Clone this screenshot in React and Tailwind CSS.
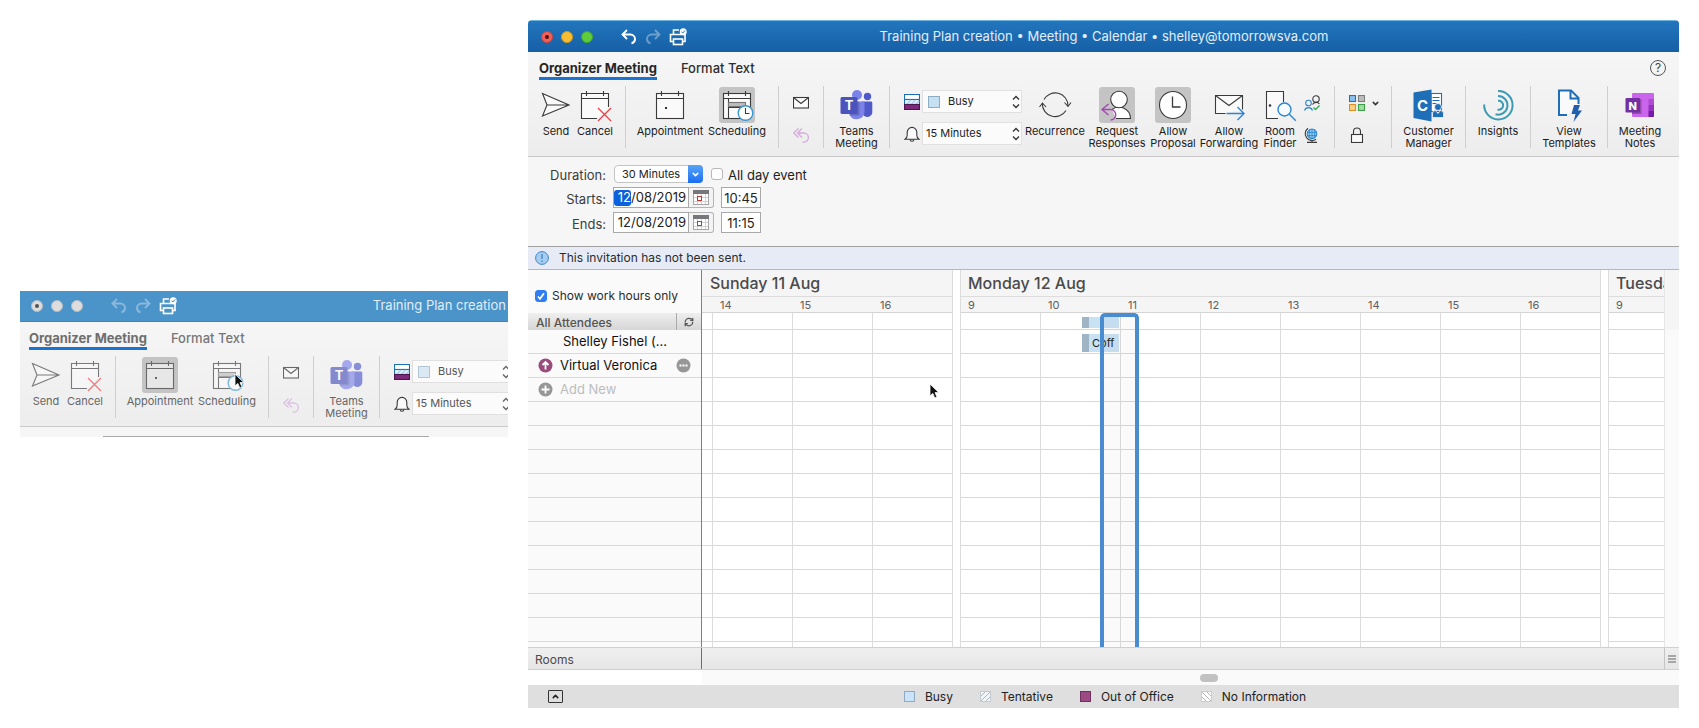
import React, { useState } from "react";
import clsx from "clsx";
import { ChevronDown, ChevronUp, RefreshCw } from "lucide-react";

const HOUR = 80;

/* ---------- icons ---------- */

function Icon({ children, size = 36, className }) {
  return (
    <svg
      width={size}
      height={size}
      viewBox={`0 0 ${size} ${size}`}
      fill="none"
      stroke="#3a3a3a"
      strokeWidth="1.1"
      className={clsx("shrink-0", className)}
      aria-hidden="true"
    >
      {children}
    </svg>
  );
}

function CalendarBase() {
  return (
    <>
      <rect x="4.5" y="6.5" width="27" height="25" fill="#fafafa" />
      <path d="M4.5 11.5h27M9.5 4v5M26.5 4v5" />
    </>
  );
}

const SendIcon = (p) => (
  <Icon {...p}>
    <path d="M4.5 6.5 31 18 4.5 29 9 18zM9 18h22" fill="#fafafa" />
  </Icon>
);

const CancelIcon = (p) => (
  <Icon {...p}>
    <path d="M20 31.5H4.5v-25h27V20" fill="#fafafa" />
    <path d="M4.5 11.5h27M9.5 4v5M26.5 4v5" />
    <path d="m21 21 13 13M34 21 21 34" stroke="#e0434b" strokeWidth="1.3" />
  </Icon>
);

const AppointmentIcon = (p) => (
  <Icon {...p}>
    <CalendarBase />
    <rect x="13" y="20" width="2" height="2" fill="#333" stroke="none" />
  </Icon>
);

const SchedulingIcon = (p) => (
  <Icon {...p}>
    <CalendarBase />
    <path d="M9.5 11.5v20M9.5 20.5h14" />
    <rect x="9.5" y="15.5" width="17" height="4" fill="#bdbdbd" stroke="#777" />
    <circle cx="26.5" cy="26" r="7.3" fill="#fff" stroke="#3b97cf" strokeWidth="1.4" />
    <path d="M26.5 21v5.5h4" />
  </Icon>
);

const MailIcon = (p) => (
  <Icon size={16} {...p}>
    <rect x=".5" y="2.5" width="15" height="10.5" fill="#fafafa" />
    <path d="m.5 2.5 7.5 6 7.5-6" />
  </Icon>
);

const ReplyAllIcon = (p) => (
  <Icon size={16} {...p}>
    <g stroke="#d5abdd" strokeWidth="1.3">
      <path d="M5.5 1.5.8 6l4.7 4.5M9 1.5 4.5 6 9 10.5M4.8 6h6a4.500 4.500 0 0 1 0 9.200H9.500" />
    </g>
  </Icon>
);

const TeamsIcon = (p) => (
  <Icon {...p}>
    <g stroke="none">
      <circle cx="18" cy="8" r="5" fill="#7b83eb" />
      <circle cx="28.500" cy="9.500" r="3.700" fill="#5059c9" />
      <path d="M22.500 14.500H32a1.300 1.300 0 0 1 1.300 1.300v8.500a5 5 0 0 1-10 1.500z" fill="#5059c9" />
      <path d="M10.500 14.500h15v10.500a8 8 0 0 1-15 3z" fill="#7b83eb" />
      <path d="M10.500 14.500h10v14h-9.800z" fill="#000" opacity=".18" />
      <rect x="1.500" y="10" width="17" height="17" rx="1.500" fill="#4b53bc" />
    </g>
    <text
      x="10"
      y="23"
      textAnchor="middle"
      fontSize="13"
      fontWeight="700"
      fontFamily="Inter, sans-serif"
      fill="#fff"
      stroke="none"
    >
      T
    </text>
  </Icon>
);

const ShowAsIcon = () => (
  <Icon size={16}>
    <rect x=".5" y=".5" width="15" height="5" fill="#fff" stroke="#1c6fb0" />
    <rect x=".5" y="5.500" width="15" height="5" fill="#e2f3fd" stroke="#1c6fb0" />
    <path d="m3 10 4-4M7.500 10l4-4M12 10l3-3" stroke="#9fd2ee" />
    <rect x=".5" y="10.500" width="15" height="5" fill="#7c2a79" stroke="#4f1450" />
  </Icon>
);

const BellIcon = () => (
  <Icon size={16}>
    <path d="M1 13.200h14c-1.600-1-2.200-2.200-2.200-4V6.200a4.800 4.800 0 0 0-9.600 0v3c0 1.800-.6 3-2.200 4z" fill="#fafafa" />
    <path d="M6.200 13.500a1.800 1.800 0 0 0 3.600 0" />
  </Icon>
);

const RecurrenceIcon = (p) => (
  <Icon {...p}>
    <path d="M7 12.500A12.800 12.800 0 0 1 31 19M29 23.500A12.800 12.800 0 0 1 5.300 16.500" />
    <path d="m27.500 15.500 3.500 4 3-4M2.500 20l3-4 3.500 4" />
  </Icon>
);

const RequestIcon = (p) => (
  <Icon {...p}>
    <path d="M13 22.500a11.500 11.500 0 0 1 18.500 9H17" fill="#fff" />
    <circle cx="20" cy="12.500" r="8.300" fill="#fff" />
    <path d="m9.500 17-6.500 5.500 6.500 5.500M3 22.500h8.500a5 5 0 0 1 0 10.500" stroke="#a646b4" strokeWidth="1.400" />
  </Icon>
);

const ClockIcon = (p) => (
  <Icon {...p}>
    <circle cx="18" cy="18" r="13.500" fill="#fff" />
    <path d="M17.500 9.500v10.500h8" strokeWidth="1.300" />
  </Icon>
);

const ForwardingIcon = (p) => (
  <Icon {...p}>
    <path d="M14.500 26.500h-10v-18h27v14" fill="#fafafa" />
    <path d="m4.500 8.500 13.500 10 13.500-10" />
    <path d="M15.500 26.500h17.500M26.500 20l6.500 6.500-6.500 6.500" stroke="#2f86d0" strokeWidth="1.400" />
  </Icon>
);

const RoomIcon = (p) => (
  <Icon {...p}>
    <path d="M16 31.500H4.500v-27h17V15" fill="#fafafa" />
    <circle cx="8" cy="18.500" r="1.300" fill="#333" stroke="none" />
    <circle cx="22.500" cy="22.500" r="6.500" fill="#f5fbff" stroke="#2f86d0" strokeWidth="1.400" />
    <path d="m27.300 27.300 6.500 6.500" stroke="#2f86d0" strokeWidth="1.400" />
  </Icon>
);

const PeopleCheckIcon = () => (
  <Icon size={16}>
    <circle cx="12" cy="4" r="3.200" />
    <path d="M8.500 9.500a4.200 4.200 0 0 1 7-.5" />
    <circle cx="4.500" cy="8" r="2.800" stroke="#2f86d0" />
    <path d="M.5 15.500a4.200 4.200 0 0 1 8 0" stroke="#2f86d0" />
    <path d="m9.500 12.500 2 2 4-4" stroke="#35a853" strokeWidth="1.300" />
  </Icon>
);

const GlobeIcon = () => (
  <Icon size={16}>
    <circle cx="8" cy="6.800" r="4.800" fill="#8fcbee" stroke="#2f86d0" />
    <path d="M3.500 5.500h9M3.500 8.500h9M8 2v9.500M6 2.500c-1 3-1 6 0 8.500M10 2.500c1 3 1 6 0 8.500" stroke="#2f86d0" strokeWidth=".8" />
    <path d="M4 1.200a6.800 6.800 0 0 0 8 11M8 13.200v2M3 15.400h10" />
  </Icon>
);

const CategoriesIcon = () => (
  <Icon size={16}>
    <rect x=".5" y=".5" width="6" height="6" fill="#8cc0ec" stroke="#1f74bd" />
    <rect x="9.500" y=".5" width="6" height="6" fill="#bdbdbd" stroke="#7c7c7c" />
    <rect x=".5" y="9.500" width="6" height="6" fill="#fbd08a" stroke="#e38f1f" />
    <rect x="9.500" y="9.500" width="6" height="6" fill="#9fdc9f" stroke="#3c9f48" />
  </Icon>
);

const LockIcon = () => (
  <Icon size={16}>
    <path d="M4.500 7.500v-3a3.500 3.500 0 0 1 7 0v3" />
    <rect x="2.500" y="7.500" width="11" height="8" fill="#fafafa" />
  </Icon>
);

const CustomerIcon = (p) => (
  <Icon {...p}>
    <rect x="20" y="6.500" width="10.500" height="18" fill="#fff" stroke="#1f6fb8" />
    <path d="M21.500 10.500h7M21.500 13.500h7M21.500 16.500h4" stroke="#1f6fb8" />
    <circle cx="27" cy="20" r="3.500" fill="#1f6fb8" stroke="#f4f4f4" strokeWidth=".8" />
    <path d="M21.500 30.500v-4a3 3 0 0 1 3-3l2.500 3 2.500-3a3 3 0 0 1 3 3v4z" fill="#1f6fb8" stroke="#f4f4f4" strokeWidth=".8" />
    <path d="M2.500 5.500 20.500 2.500v32l-18-3.500z" fill="#1f6fb8" stroke="none" />
    <text
      x="11.500"
      y="23.500"
      textAnchor="middle"
      fontSize="15"
      fontWeight="700"
      fontFamily="Inter, sans-serif"
      fill="#fff"
      stroke="none"
    >
      C
    </text>
  </Icon>
);

const InsightsIcon = (p) => (
  <Icon {...p}>
    <g stroke="#3d9ab3" strokeWidth="2">
      <path d="M18 4a14.200 14.200 0 1 1-13.800 13.500" />
      <path d="M18 9a9.300 9.300 0 1 1-2.500 18.200" />
      <path d="M18 13.800a4.500 4.500 0 1 1-.5 8.800" />
    </g>
  </Icon>
);

const TemplatesIcon = (p) => (
  <Icon {...p}>
    <path d="M16 28H8V3.500h12l7.500 7.500v6" fill="#fafafa" stroke="#1f6fb8" strokeWidth="2" />
    <path d="M19.500 4v7.500h8" stroke="#1f6fb8" strokeWidth="2" />
    <path d="M23 18h6l-2 5.500h4L22.500 35l2-8H20.500z" fill="#1f5fae" stroke="none" />
  </Icon>
);

const NotesIcon = (p) => (
  <Icon {...p}>
    <g stroke="none">
      <rect x="10" y="6" width="22" height="24" rx="1" fill="#ca64ea" />
      <path d="M26.500 12H32v6h-5.500z" fill="#ae4bd5" />
      <path d="M26.500 18H32v6h-5.500z" fill="#9332bf" />
      <path d="M26.500 24H32v5a1 1 0 0 1-1 1h-4.500z" fill="#7719aa" />
      <rect x="10" y="12" width="9.500" height="15" fill="#000" opacity=".25" />
      <rect x="3.500" y="11" width="14.500" height="14.500" rx="1" fill="#7330a0" />
    </g>
    <text
      x="10.700"
      y="22.500"
      textAnchor="middle"
      fontSize="11"
      fontWeight="800"
      fontFamily="Inter, sans-serif"
      fill="#fff"
      stroke="none"
    >
      N
    </text>
  </Icon>
);

const UndoIcon = ({ className }) => (
  <svg width="16" height="16" viewBox="0 0 16 16" fill="none" stroke="#fff" strokeWidth="1.900" className={className}>
    <path d="M6 1 1.500 5.500 6 10M1.500 5.500h8a4.500 4.500 0 0 1 4.500 4.500v.5a4.500 4.500 0 0 1-3.500 3.800" />
  </svg>
);

const PrintIcon = () => (
  <svg width="18" height="18" viewBox="0 0 18 18" fill="none" stroke="#fff" strokeWidth="1.600">
    <path d="M10 2H4.500v4.500M4 13.500H1.500v-7h14.500v7h-2.500" />
    <rect x="4.500" y="11" width="9" height="5.500" />
    <circle cx="14.200" cy="3.700" r="3.500" fill="#fff" stroke="none" />
    <path d="m12.500 3.700 1.300 1.300 2.200-2.500" stroke="#2b78bd" strokeWidth="1" />
  </svg>
);

const Cursor = () => (
  <svg width="11" height="17" viewBox="0 0 11 17" aria-hidden="true">
    <path d="M1 1v12l2.800-2.600 2 4.600 2.200-1-2-4.400h3.800z" fill="#111" stroke="#fff" strokeWidth=".8" />
  </svg>
);

/* ---------- title bar ---------- */

function TitleBar({ title, inactive }) {
  const light = "size-3 rounded-full border flex items-center justify-center";
  return (
    <header
      className={clsx(
        "flex items-center h-8 pl-[13px] text-[13px]",
        inactive
          ? "bg-[#4b94ca] border-b border-[#3d86bf]"
          : "bg-linear-to-b from-[#2276bd] to-[#165fa6] border-t border-[#6fb2df]"
      )}
    >
      <div className="flex gap-2 w-20 shrink-0">
        <button
          aria-label="Close"
          className={clsx(light, inactive ? "bg-[#dddddd] border-[#b5bcc2]" : "bg-[#f0605a] border-[#c9443f]")}
        >
          <span className={clsx("size-1 rounded-full", inactive ? "bg-[#555]" : "bg-[#5c0d0a]")} />
        </button>
        <button
          aria-label="Minimize"
          className={clsx(light, inactive ? "bg-[#dddddd] border-[#b5bcc2]" : "bg-[#f9bd31] border-[#d09a24]")}
        />
        <button
          aria-label="Zoom"
          className={clsx(light, inactive ? "bg-[#dddddd] border-[#b5bcc2]" : "bg-[#5fcb3d] border-[#47a52c]")}
        />
      </div>
      <div className="flex items-center gap-2 shrink-0">
        <button aria-label="Undo">
          <UndoIcon className={clsx(inactive && "opacity-35")} />
        </button>
        <button aria-label="Redo">
          <UndoIcon className="-scale-x-100 opacity-35" />
        </button>
        <button aria-label="Print">
          <PrintIcon />
        </button>
      </div>
      <h1
        className={clsx(
          "flex-1 whitespace-nowrap",
          inactive ? "text-right pr-0.5 text-[#e0eef8]" : "text-center pr-[158px] text-[#e2eefa]"
        )}
      >
        {title}
      </h1>
    </header>
  );
}

/* ---------- ribbon ---------- */

const Divider = () => <span className="w-px h-full bg-[#cfcfcf] shrink-0" />;

function RibbonButton({ icon: I, lines, active, muted, className, children }) {
  return (
    <button className={clsx("relative flex flex-col items-center shrink-0 pt-px", className)}>
      <span className={clsx("size-9 rounded-[3px]", active && "bg-[#c4c4c4]")}>
        <I className={clsx(muted && "opacity-65")} />
      </span>
      <span
        className={clsx(
          "mt-0.5 text-[11px] leading-3 whitespace-nowrap",
          muted ? "text-[#666]" : "text-[#1c1c1c]"
        )}
      >
        {lines.map((l) => (
          <span key={l} className="block">
            {l}
          </span>
        ))}
      </span>
      {children}
    </button>
  );
}

function Stepper({ label, value, options, swatch, muted }) {
  const [v, setV] = useState(value);
  return (
    <div className="relative w-[100px] h-[23px]">
      <select
        aria-label={label}
        value={v}
        onChange={(e) => setV(e.target.value)}
        className={clsx(
          "block w-full h-full appearance-none bg-[#fbfbfb] border border-[#e0e0e0] text-[11px]",
          swatch ? "pl-[25px]" : "pl-[3px]",
          muted ? "text-[#555]" : "text-[#1c1c1c]"
        )}
      >
        {options.map((o) => (
          <option key={o}>{o}</option>
        ))}
      </select>
      {swatch && (
        <span
          className={clsx(
            "absolute left-[6px] top-[6px] size-3 border pointer-events-none",
            muted ? "bg-[#dbe9f5] border-[#b3c4d2]" : "bg-[#c5e0f3] border-[#8fabc0]"
          )}
        />
      )}
      <svg
        width="8"
        height="14"
        viewBox="0 0 8 14"
        fill="none"
        stroke={muted ? "#666" : "#333"}
        strokeWidth="1.300"
        className="absolute right-[2px] top-[5px] pointer-events-none"
      >
        <path d="m1 4.500 3-3 3 3M1 9.500l3 3 3-3" />
      </svg>
    </div>
  );
}

function Tools() {
  return (
    <>
      <RibbonButton icon={RecurrenceIcon} lines={["Recurrence"]} className="w-[66px]" />
      <RibbonButton icon={RequestIcon} lines={["Request", "Responses"]} active className="w-[58px]" />
      <RibbonButton icon={ClockIcon} lines={["Allow", "Proposal"]} active className="w-[54px]" />
      <RibbonButton icon={ForwardingIcon} lines={["Allow", "Forwarding"]} className="w-[58px]" />
      <RibbonButton icon={RoomIcon} lines={["Room", "Finder"]} className="w-11" />
      <div className="flex flex-col items-center w-8 pr-3 gap-4 pt-[9px] shrink-0">
        <button aria-label="Check names">
          <PeopleCheckIcon />
        </button>
        <button aria-label="Time zones">
          <GlobeIcon />
        </button>
      </div>
      <Divider />
      <div className="flex flex-col w-14 pl-3.5 gap-4 pt-[9px] shrink-0">
        <button aria-label="Categorize" className="flex items-center gap-1.5">
          <CategoriesIcon />
          <ChevronDown size={9} strokeWidth={4} className="text-[#333]" />
        </button>
        <button aria-label="Private" className="w-4">
          <LockIcon />
        </button>
      </div>
      <Divider />
      <RibbonButton icon={CustomerIcon} lines={["Customer", "Manager"]} className="w-[73px]" />
      <Divider />
      <RibbonButton icon={InsightsIcon} lines={["Insights"]} className="w-16" />
      <Divider />
      <RibbonButton icon={TemplatesIcon} lines={["View", "Templates"]} className="w-[76px]" />
      <Divider />
      <RibbonButton icon={NotesIcon} lines={["Meeting", "Notes"]} className="w-16" />
    </>
  );
}

function Ribbon({ muted, view }) {
  const tab = "leading-[18px] text-[13px] border-b-[3px] whitespace-nowrap";
  return (
    <div className="bg-linear-to-b from-[#f6f6f6] to-[#ededed] border-b border-[#c9c9c9]">
      <nav className="flex items-start pt-[7px] pl-[11px] pr-[13px]">
        <button
          className={clsx(tab, "font-bold border-[#1a73d0]", muted ? "text-[#6e6e6e]" : "text-[#262626]")}
        >
          Organizer Meeting
        </button>
        <button
          className={clsx(tab, "ml-6 font-medium border-transparent", muted ? "text-[#777]" : "text-[#2e2e2e]")}
        >
          Format Text
        </button>
        {!muted && (
          <button
            aria-label="Help"
            className="ml-auto mt-px size-4 rounded-full border border-[#555] text-[12px] leading-[14px] text-[#444]"
          >
            ?
          </button>
        )}
      </nav>

      <div className="flex h-[62px] mt-1.5 mb-2">
        <div className="flex pl-2 pr-[11px] shrink-0">
          <RibbonButton muted={muted} icon={SendIcon} lines={["Send"]} className="w-10" />
          <RibbonButton muted={muted} icon={CancelIcon} lines={["Cancel"]} className="w-[38px]" />
        </div>
        <Divider />
        <div className="flex pl-[11px] pr-[7px] shrink-0">
          <RibbonButton
            muted={muted}
            icon={AppointmentIcon}
            lines={["Appointment"]}
            active={view === "appointment"}
            className="w-[66px]"
          />
          <RibbonButton
            muted={muted}
            icon={SchedulingIcon}
            lines={["Scheduling"]}
            active={view === "scheduling"}
            className="w-[68px]"
          >
            {muted && (
              <span className="absolute left-[41px] top-[17px]">
                <Cursor />
              </span>
            )}
          </RibbonButton>
        </div>
        <Divider />
        <div className="flex flex-col items-center w-11 gap-4 pt-[9px] shrink-0">
          <button aria-label="Message">
            <MailIcon className={clsx("block", muted && "opacity-75")} />
          </button>
          <button aria-label="Reply all">
            <ReplyAllIcon className={clsx("block", muted && "opacity-65")} />
          </button>
        </div>
        <Divider />
        <RibbonButton muted={muted} icon={TeamsIcon} lines={["Teams", "Meeting"]} className="w-[65px]" />
        <Divider />
        <div className="flex flex-col gap-[9px] pt-1 pl-3.5 shrink-0">
          <div className="flex items-center gap-0.5">
            <ShowAsIcon />
            <Stepper
              label="Show as"
              value="Busy"
              options={["Free", "Tentative", "Busy", "Out of Office"]}
              swatch
              muted={muted}
            />
          </div>
          <div className="flex items-center gap-0.5">
            <BellIcon />
            <Stepper
              label="Reminder"
              value="15 Minutes"
              options={["None", "5 Minutes", "15 Minutes", "30 Minutes"]}
              muted={muted}
            />
          </div>
        </div>
        {!muted && <Tools />}
      </div>
    </div>
  );
}

/* ---------- time form ---------- */

function DateRow({ label, day, rest, time, selected }) {
  const id = label.toLowerCase();
  return (
    <div className="flex items-center h-[21px]">
      <label htmlFor={id} className="w-[78px] pt-0.5 leading-4 text-right text-[#3c3c3c]">
        {label}:
      </label>
      <div className="flex items-center ml-[7px] w-[76px] h-[21px] bg-white border border-[#a9a9a9]">
        <input
          id={id}
          defaultValue={day}
          className={clsx(
            "w-[17px] h-4 text-right rounded-[3px] outline-none",
            selected && "bg-[#0a60dd] text-white"
          )}
        />
        <input aria-label={`${label} month and year`} defaultValue={rest} className="w-[57px] outline-none" />
      </div>
      <button
        aria-label={`Pick ${id} date`}
        className="flex items-center justify-center w-[25px] h-[21px] bg-[#f3f3f3] border border-l-0 border-[#b5b5b5] rounded-r-[3px]"
      >
        <svg width="16" height="15" viewBox="0 0 16 15" fill="none">
          <rect x=".5" y=".5" width="15" height="14" fill="#fff" stroke="#a5a5a5" />
          <rect width="16" height="4" fill="#77777b" />
          <path d="M4.500 4v10M8.500 4v10M12.500 4v10M1 7.500h14M1 11.500h14" stroke="#d0d0d0" />
          <rect x="4.500" y="6.500" width="4" height="4" fill="#fff" stroke="#c0383c" />
        </svg>
      </button>
      <input
        aria-label={`${label} time`}
        defaultValue={time}
        className="ml-[7px] w-10 h-[21px] text-center bg-white border border-[#a9a9a9] outline-none"
      />
    </div>
  );
}

function TimeForm() {
  return (
    <form className="flex flex-col pt-2 pb-[13px] bg-[#f6f6f6] border-b border-[#a3a3a3] text-[13px] text-[#222]">
      <div className="flex items-center h-[18px] mb-1">
        <label htmlFor="duration" className="w-[78px] pt-0.5 leading-4 text-right text-[#3c3c3c]">
          Duration:
        </label>
        <div className="relative ml-2 w-[89px] h-[18px]">
          <select
            id="duration"
            defaultValue="30 Minutes"
            className="block w-full h-full pl-[7px] appearance-none bg-white border border-[#c4c4c4] rounded-[4px] text-[11px] leading-4"
          >
            <option>15 Minutes</option>
            <option>30 Minutes</option>
            <option>1 Hour</option>
          </select>
          <span className="absolute right-0 top-0 h-full w-[15px] flex items-center justify-center rounded-r-[4px] bg-linear-to-b from-[#58a3f8] to-[#1a6df0] text-white pointer-events-none">
            <ChevronDown size={9} strokeWidth={4} />
          </span>
        </div>
        <input
          id="allday"
          type="checkbox"
          className="ml-2 size-3 appearance-none bg-white border border-[#b8b8b8] rounded-[3px]"
        />
        <label htmlFor="allday" className="ml-[5px] pt-0.5 leading-4">
          All day event
        </label>
      </div>
      <div className="flex flex-col gap-1">
        <DateRow label="Starts" day="12" rest="/08/2019" time="10:45" selected />
        <DateRow label="Ends" day="12" rest="/08/2019" time="11:15" />
      </div>
    </form>
  );
}

/* ---------- schedule ---------- */

const days = [
  { name: "Sunday 11 Aug", lead: true, hours: [14, 15, 16] },
  { name: "Monday 12 Aug", hours: [9, 10, 11, 12, 13, 14, 15, 16] },
  { name: "Tuesday", hours: [9] },
];

const rows = Array.from({ length: 13 });

function Cells({ day, className }) {
  return (
    <div className={clsx("flex border-[#d9d9d9]", className)}>
      {day.lead && <span className="w-2.5" />}
      {day.hours.map((h) => (
        <span key={h} className="w-20 border-l border-[#dcdcdc]" />
      ))}
      <span className="w-px bg-[#dcdcdc]" />
    </div>
  );
}

function Day({ day, children }) {
  return (
    <section className="relative shrink-0">
      <div className={clsx("bg-[#f5f5f5] border-[#dcdcdc]", day.lead ? "border-r" : "border-x")}>
        <h2
          className={clsx(
            "h-[27px] border-b border-[#dcdcdc] text-base leading-[26px] font-medium text-[#4a4a4a] whitespace-nowrap",
            day.lead ? "pl-2" : "pl-[7px]"
          )}
        >
          {day.name}
        </h2>
        <div
          className={clsx(
            "flex h-4 border-b border-[#d4d4d4] text-[11px] leading-4 text-[#5e5e5e]",
            day.lead ? "pl-[18px]" : "pl-[7px]"
          )}
        >
          {day.hours.map((h, i) => (
            <span key={h} className={i === day.hours.length - 1 ? "w-[70px]" : "w-20"}>
              {h}
            </span>
          ))}
        </div>
      </div>
      <Cells day={day} className="h-[17px] border-b" />
      {rows.map((_, i) => (
        <Cells key={i} day={day} className="h-6 border-b" />
      ))}
      <Cells day={day} className="h-[5px]" />
      {children}
    </section>
  );
}

// hours on the 24h clock -> offset inside a day that starts at 9
const span = (from, to) => ({ left: (from - 9) * HOUR, width: (to - from) * HOUR });

function Attendee({ children, icon, action }) {
  return (
    <li className="flex items-center h-6 pl-2.5 pr-2.5 border-b border-[#d9d9d9] text-[13px]">
      <span className="w-[22px]">{icon}</span>
      {children}
      {action}
    </li>
  );
}

function Badge({ color, children }) {
  return (
    <svg width="15" height="15" viewBox="0 0 15 15" fill="none" stroke="#fff" strokeWidth="1.800">
      <circle cx="7.500" cy="7.500" r="7" fill={color} stroke="none" />
      {children}
    </svg>
  );
}

function Schedule() {
  const [workHours, setWorkHours] = useState(true);
  const [sunday, monday, tuesday] = days;
  return (
    <div className="flex">
      <aside className="w-[174px] shrink-0 bg-[#fafafa] border-r border-[#808080]">
        <div className="flex items-center h-[43px] pt-2 pl-[7px]">
          <span className="relative size-3">
            <input
              id="workhours"
              type="checkbox"
              checked={workHours}
              onChange={() => setWorkHours(!workHours)}
              className="block size-3 appearance-none rounded-[3px] bg-white border border-[#b8b8b8] checked:bg-[#2f7ef5] checked:border-[#2f7ef5]"
            />
            <svg
              width="12"
              height="12"
              viewBox="0 0 12 12"
              fill="none"
              stroke="#fff"
              strokeWidth="1.700"
              className="absolute inset-0 pointer-events-none"
            >
              <path d="m3 6.500 2 2.300L9 3.200" />
            </svg>
          </span>
          <label htmlFor="workhours" className="ml-[5px] text-[12px] text-[#2b2b2b]">
            Show work hours only
          </label>
        </div>
        <div className="flex h-[17px] bg-linear-to-b from-[#efefef] to-[#d6d6d6] text-[12px] leading-5 font-medium text-[#555]">
          <span className="flex-1 pl-2">All Attendees</span>
          <button
            aria-label="Refresh"
            className="flex items-center justify-center w-[25px] border-l border-[#aaa] text-[#555]"
          >
            <RefreshCw size={10} strokeWidth={3} />
          </button>
        </div>
        <ul className="text-[#111]">
          <Attendee>
            <span className="pl-[3px]">Shelley Fishel (...</span>
          </Attendee>
          <Attendee
            icon={
              <Badge color="#9b4a7e">
                <path d="M7.500 11.500v-7M4.500 7l3-3 3 3" />
              </Badge>
            }
            action={
              <button aria-label="More" className="ml-auto">
                <Badge color="#979797">
                  <path d="M3.500 7.500h8" strokeWidth="2" strokeDasharray="2 1" />
                </Badge>
              </button>
            }
          >
            Virtual Veronica
          </Attendee>
          <Attendee
            icon={
              <Badge color="#979797">
                <path d="M7.500 3.500v8M3.500 7.500h8" />
              </Badge>
            }
          >
            <input
              aria-label="Add New"
              placeholder="Add New"
              className="w-24 outline-none placeholder:text-[#bdbdbd]"
            />
          </Attendee>
          {rows.slice(3).map((_, i) => (
            <li key={i} className="h-6 border-b border-[#d9d9d9]" />
          ))}
        </ul>
      </aside>

      <div className="flex flex-1 min-w-0 gap-[7px] overflow-hidden">
        <Day day={sunday}>
          <span className="absolute left-[227px] top-[113px]">
            <Cursor />
          </span>
        </Day>
        <Day day={monday}>
          <span
            className="absolute top-[47px] h-[11px] bg-[#c9e2f3] border-l-[7px] border-[#9fb4c5]"
            style={span(10.525, 10.99)}
          />
          <span
            className="absolute top-[64px] h-[18px] pl-[3px] bg-[#c9e2f3] border-l-[7px] border-[#9fb4c5] text-[11px] leading-[18px] text-[#222]"
            style={span(10.525, 10.99)}
          >
            Coff
          </span>
          <span
            className="absolute top-[43px] bottom-0 bg-black/[.02] border-4 border-b-0 border-[#4a8cd0] rounded-t-[5px]"
            style={span(10.75, 11.2375)}
          />
        </Day>
        <Day day={tuesday} />
      </div>

      <div className="w-[15px] shrink-0 bg-[#fafafa] border-l border-[#e6e6e6]">
        <div className="h-[60px] bg-[#f5f5f5]" />
      </div>
    </div>
  );
}

/* ---------- footer ---------- */

const legend = [
  { label: "Busy", fill: "#c9e4f8", edge: "#90abc0" },
  { label: "Tentative", fill: "#f1f7fb", edge: "#c3ccd2", line: "M1 10 10 1M1 5l4-4M6 10l4-4" },
  { label: "Out of Office", fill: "#9b4a83", edge: "#703060" },
  { label: "No Information", fill: "#ffffff", edge: "#cdcdcd", line: "M1 1l9 9M6 1l4 4M1 6l4 4" },
];

function Footer() {
  return (
    <>
      <div className="flex h-[23px] bg-linear-to-b from-[#efefef] to-[#e6e6e6] border-y border-[#d0d0d0] text-[12px] leading-6 text-[#4a4a4a]">
        <div className="w-[174px] pl-[7px] border-r border-[#6f6f6f]">Rooms</div>
        <button
          aria-label="Resize rooms"
          className="ml-auto flex flex-col items-center justify-center gap-px w-[15px] border-l border-[#c4c4c4]"
        >
          <span className="w-2 h-0.5 bg-[#a8a8a8]" />
          <span className="w-2 h-0.5 bg-[#a8a8a8]" />
          <span className="w-2 h-0.5 bg-[#a8a8a8]" />
        </button>
      </div>
      <div className="flex h-[15px]">
        <div className="w-[174px] bg-white" />
        <div className="flex-1 flex items-center bg-[#fafafa]">
          <span className="ml-[51%] w-[18px] h-2 rounded-full bg-[#c1c1c1]" />
        </div>
      </div>
      <footer className="flex items-center h-[23px] px-5 bg-[#dfdfdf] text-[12px] text-[#222]">
        <button
          aria-label="Expand"
          className="flex items-center justify-center w-[15px] h-[13px] border border-[#333] rounded-[1px]"
        >
          <ChevronUp size={9} strokeWidth={4} />
        </button>
        <ul className="flex-1 flex justify-center gap-[27px] pr-3">
          {legend.map((l) => (
            <li key={l.label} className="flex items-center gap-2.5">
              <svg width="11" height="11" viewBox="0 0 11 11">
                <rect x=".5" y=".5" width="10" height="10" fill={l.fill} stroke={l.edge} />
                {l.line && <path d={l.line} stroke="#adb5bb" fill="none" />}
              </svg>
              {l.label}
            </li>
          ))}
        </ul>
      </footer>
    </>
  );
}

export default function App() {
  return (
    <main className="flex items-start gap-5 p-5 min-h-screen bg-white font-['Inter','Liberation_Sans',sans-serif]">
      {/* Appointment view, in the background */}
      <div className="w-[488px] shrink-0 mt-[271px] overflow-hidden">
        <div className="-ml-0.5 -mt-px">
          <TitleBar title="Training Plan creation" inactive />
          <Ribbon muted view="appointment" />
          <div className="h-2.5 pl-[85px] bg-[#f6f6f6] flex items-end">
            <span className="w-[326px] h-px bg-[#a8a8a8]" />
          </div>
        </div>
      </div>

      {/* Scheduling view */}
      <div className="flex-1 min-w-0 overflow-hidden rounded-t-[4px]">
        <TitleBar title="Training Plan creation • Meeting • Calendar • shelley@tomorrowsva.com" />
        <Ribbon view="scheduling" />
        <TimeForm />
        <div className="flex items-center h-[23px] pl-[7px] bg-[#e6ebf5] border-b border-[#b3b8c6] text-[12px] text-[#2b2b2b]">
          <svg width="14" height="14" viewBox="0 0 14 14" fill="none" stroke="#3f86c8">
            <circle cx="7" cy="7" r="6.400" fill="#a5cdf2" />
            <path d="M7 3v5M7 9.500v1.500" strokeWidth="1.300" />
          </svg>
          <span className="ml-2.5">This invitation has not been sent.</span>
        </div>
        <Schedule />
        <Footer />
      </div>
    </main>
  );
}
